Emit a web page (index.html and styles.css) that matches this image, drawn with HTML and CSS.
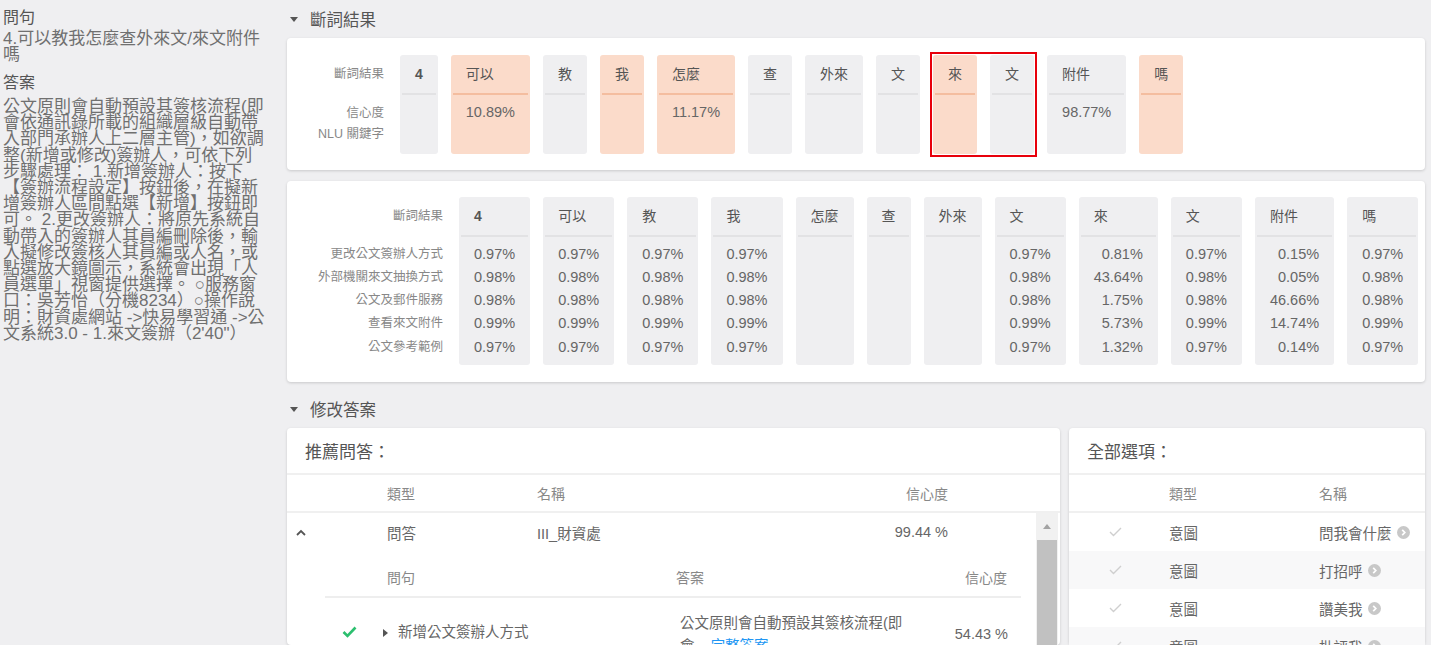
FILE: index.html
```html
<!DOCTYPE html>
<html lang="zh-Hant">
<head>
<meta charset="utf-8">
<title>斷詞結果</title>
<link rel="stylesheet" href="styles.css">
</head>
<body>
<div class="app">
  <aside class="qa">
    <div class="qa-h">問句</div>
    <div class="qa-t q">4.可以教我怎麼查外來文/來文附件<br>嗎</div>
    <div class="qa-h a">答案</div>
    <div class="qa-t ans">公文原則會自動預設其簽核流程(即<br>會依通訊錄所載的組織層級自動帶<br>入部門承辦人上二層主管)，如欲調<br>整(新增或修改)簽辦人，可依下列<br>步驟處理： 1.新增簽辦人：按下<br>【簽辦流程設定】按鈕後，在擬新<br>增簽辦人區間點選【新增】按鈕即<br>可。 2.更改簽辦人：將原先系統自<br>動帶入的簽辦人其員編刪除後，輸<br>入擬修改簽核人其員編或人名，或<br>點選放大鏡圖示，系統會出現「人<br>員選單」視窗提供選擇。 ○服務窗<br>口：吳芳怡（分機8234）○操作說<br>明：財資處網站 -&gt;快易學習通 -&gt;公<br>文系統3.0 - 1.來文簽辦（2'40"）</div>
  </aside>

  <main class="main">
    <div class="sec-head"><span class="caret-down"></span>斷詞結果</div>

    <section class="card seg">
      <div class="lbls">
        <div class="l-h">斷詞結果</div>
        <div class="l-v"><div>信心度</div><div>NLU 關鍵字</div></div>
      </div>
      <div class="toks">
        <div class="tok"><div class="th b">4</div><div class="tv"></div></div>
        <div class="tok peach"><div class="th">可以</div><div class="tv">10.89%</div></div>
        <div class="tok"><div class="th">教</div><div class="tv"></div></div>
        <div class="tok peach"><div class="th">我</div><div class="tv"></div></div>
        <div class="tok peach"><div class="th">怎麼</div><div class="tv">11.17%</div></div>
        <div class="tok"><div class="th">查</div><div class="tv"></div></div>
        <div class="tok"><div class="th">外來</div><div class="tv"></div></div>
        <div class="tok"><div class="th">文</div><div class="tv"></div></div>
        <div class="hl">
          <div class="tok peach"><div class="th">來</div><div class="tv"></div></div>
          <div class="tok"><div class="th">文</div><div class="tv"></div></div>
        </div>
        <div class="tok"><div class="th">附件</div><div class="tv">98.77%</div></div>
        <div class="tok peach"><div class="th">嗎</div><div class="tv"></div></div>
      </div>
    </section>

    <section class="card intents">
      <div class="lbls">
        <div class="l-h">斷詞結果</div>
        <div class="l-v"><div>更改公文簽辦人方式</div><div>外部機關來文抽換方式</div><div>公文及郵件服務</div><div>查看來文附件</div><div>公文參考範例</div></div>
      </div>
      <div class="toks">
        <div class="tok"><div class="th b">4</div><div class="tv"><div>0.97%</div><div>0.98%</div><div>0.98%</div><div>0.99%</div><div>0.97%</div></div></div>
        <div class="tok"><div class="th">可以</div><div class="tv"><div>0.97%</div><div>0.98%</div><div>0.98%</div><div>0.99%</div><div>0.97%</div></div></div>
        <div class="tok"><div class="th">教</div><div class="tv"><div>0.97%</div><div>0.98%</div><div>0.98%</div><div>0.99%</div><div>0.97%</div></div></div>
        <div class="tok"><div class="th">我</div><div class="tv"><div>0.97%</div><div>0.98%</div><div>0.98%</div><div>0.99%</div><div>0.97%</div></div></div>
        <div class="tok"><div class="th">怎麼</div><div class="tv"></div></div>
        <div class="tok"><div class="th">查</div><div class="tv"></div></div>
        <div class="tok"><div class="th">外來</div><div class="tv"></div></div>
        <div class="tok"><div class="th">文</div><div class="tv"><div>0.97%</div><div>0.98%</div><div>0.98%</div><div>0.99%</div><div>0.97%</div></div></div>
        <div class="tok"><div class="th">來</div><div class="tv"><div>0.81%</div><div>43.64%</div><div>1.75%</div><div>5.73%</div><div>1.32%</div></div></div>
        <div class="tok"><div class="th">文</div><div class="tv"><div>0.97%</div><div>0.98%</div><div>0.98%</div><div>0.99%</div><div>0.97%</div></div></div>
        <div class="tok"><div class="th">附件</div><div class="tv"><div>0.15%</div><div>0.05%</div><div>46.66%</div><div>14.74%</div><div>0.14%</div></div></div>
        <div class="tok"><div class="th">嗎</div><div class="tv"><div>0.97%</div><div>0.98%</div><div>0.98%</div><div>0.99%</div><div>0.97%</div></div></div>
      </div>
    </section>

    <div class="sec-head"><span class="caret-down"></span>修改答案</div>

    <div class="bottom">
      <section class="card rec">
        <div class="ctitle">推薦問答：</div>
        <div class="thead rec-head">
          <span class="c-lead"></span><span class="c-type">類型</span><span class="c-name">名稱</span><span class="c-conf">信心度</span>
        </div>
        <div class="rbody">
          <div class="rows">
            <div class="row">
              <span class="c-lead chev"><svg width="10" height="7" viewBox="0 0 10 7"><polyline points="1,6 5,2 9,6" fill="none" stroke="#555" stroke-width="1.8"/></svg></span>
              <span class="c-type">問答</span><span class="c-name">III_財資處</span><span class="c-conf">99.44 %</span>
            </div>
            <div class="sub">
              <div class="subhead">
                <span class="s-lead"></span><span class="s-q">問句</span><span class="s-a">答案</span><span class="s-c">信心度</span>
              </div>
              <div class="subrow">
                <span class="s-check"><svg width="15" height="12" viewBox="0 0 15 12"><polyline points="1.5,6 5.5,10 13.5,1.5" fill="none" stroke="#2cbf6f" stroke-width="2.6"/></svg></span>
                <span class="s-qv"><span class="caret-right"></span>新增公文簽辦人方式</span>
                <span class="s-av">公文原則會自動預設其簽核流程(即<br>會... <a class="link">完整答案</a></span>
                <span class="s-cv">54.43 %</span>
              </div>
            </div>
          </div>
          <div class="sbar"><span class="up"></span><span class="thumb"></span></div>
        </div>
      </section>

      <section class="card all">
        <div class="ctitle">全部選項：</div>
        <div class="thead">
          <span class="c-lead"></span><span class="c-type">類型</span><span class="c-name">名稱</span>
        </div>
        <div class="arow">
          <span class="a-check"><svg width="13" height="10" viewBox="0 0 13 10"><polyline points="1,5 4.5,8.5 12,1" fill="none" stroke="#cfcfcf" stroke-width="1.4"/></svg></span>
          <span class="c-type">意圖</span><span class="a-name">問我會什麼<svg class="go" width="13" height="13" viewBox="0 0 13 13"><circle cx="6.5" cy="6.5" r="6.5" fill="#c8c8c8"/><polyline points="5.2,3.8 7.8,6.5 5.2,9.2" fill="none" stroke="#fff" stroke-width="1.7"/></svg></span>
        </div>
        <div class="arow alt">
          <span class="a-check"><svg width="13" height="10" viewBox="0 0 13 10"><polyline points="1,5 4.5,8.5 12,1" fill="none" stroke="#cfcfcf" stroke-width="1.4"/></svg></span>
          <span class="c-type">意圖</span><span class="a-name">打招呼<svg class="go" width="13" height="13" viewBox="0 0 13 13"><circle cx="6.5" cy="6.5" r="6.5" fill="#c8c8c8"/><polyline points="5.2,3.8 7.8,6.5 5.2,9.2" fill="none" stroke="#fff" stroke-width="1.7"/></svg></span>
        </div>
        <div class="arow">
          <span class="a-check"><svg width="13" height="10" viewBox="0 0 13 10"><polyline points="1,5 4.5,8.5 12,1" fill="none" stroke="#cfcfcf" stroke-width="1.4"/></svg></span>
          <span class="c-type">意圖</span><span class="a-name">讚美我<svg class="go" width="13" height="13" viewBox="0 0 13 13"><circle cx="6.5" cy="6.5" r="6.5" fill="#c8c8c8"/><polyline points="5.2,3.8 7.8,6.5 5.2,9.2" fill="none" stroke="#fff" stroke-width="1.7"/></svg></span>
        </div>
        <div class="arow alt">
          <span class="a-check"><svg width="13" height="10" viewBox="0 0 13 10"><polyline points="1,5 4.5,8.5 12,1" fill="none" stroke="#cfcfcf" stroke-width="1.4"/></svg></span>
          <span class="c-type">意圖</span><span class="a-name">批評我<svg class="go" width="13" height="13" viewBox="0 0 13 13"><circle cx="6.5" cy="6.5" r="6.5" fill="#c8c8c8"/><polyline points="5.2,3.8 7.8,6.5 5.2,9.2" fill="none" stroke="#fff" stroke-width="1.7"/></svg></span>
        </div>
      </section>
    </div>
  </main>
</div>
</body>
</html>
```

FILE: styles.css
```css
* { box-sizing: border-box; }

body {
  margin: 0;
  background: #fff;
  font-family: "Liberation Sans", "Noto Sans CJK TC", sans-serif;
  color: #666;
}

.app {
  display: flex;
  height: 645px;
  overflow: hidden;
  background: #efeff1;
}

/* left question / answer panel */
.qa {
  flex: none;
  width: 287px;
  padding: 8px 0 0 3px;
}
.qa-h {
  font-size: 16px;
  line-height: 20px;
  color: #555;
}
.qa-h.a { margin-top: 9.6px; }
.qa-t {
  font-size: 17px;
  line-height: 16.2px;
  color: #707070;
  white-space: nowrap;
}
.qa-t.q { margin-top: 3px; }
.qa-t.ans { margin-top: 6px; }

/* main column */
.main {
  flex: 1;
  min-width: 0;
  padding-right: 6px;
  display: flex;
  flex-direction: column;
}
.sec-head {
  flex: none;
  height: 38px;
  display: flex;
  align-items: center;
  padding-left: 3px;
  font-size: 16.5px;
  color: #555;
}
.caret-down {
  width: 0;
  height: 0;
  border-left: 4px solid transparent;
  border-right: 4px solid transparent;
  border-top: 5px solid #555;
  margin-right: 12px;
}

.card {
  flex: none;
  background: #fff;
  border-radius: 4px;
  box-shadow: 0 1px 3px rgba(0, 0, 0, 0.16);
}

/* token cards */
.seg {
  display: flex;
  padding: 17px 0 16px 31px;
  margin-bottom: 11px;
}
.intents {
  display: flex;
  padding: 16px 0 17px 31px;
  margin-bottom: 8px;
}
.lbls {
  display: flex;
  flex-direction: column;
  align-items: flex-end;
  font-size: 12.5px;
  color: #888;
  margin-right: 16px;
  white-space: nowrap;
}
.l-h {
  height: 40px;
  line-height: 38px;
}
.seg .l-v { padding-top: 8px; line-height: 21px; text-align: right; }
.intents .l-v { padding-top: 5.5px; line-height: 23.3px; text-align: right; }

.toks {
  display: flex;
  gap: 13px;
}
.hl {
  display: flex;
  gap: 13px;
  outline: 2px solid #e8000b;
  outline-offset: 1px;
}
.tok {
  display: flex;
  flex-direction: column;
  background: #efeff1;
  border-radius: 3px;
  padding: 0 2px;
}
.seg .tok { height: 99px; }
.intents .tok { height: 168px; }
.th {
  height: 40px;
  line-height: 38px;
  border-bottom: 2px solid #e2e2e4;
  padding: 0 13px;
  font-size: 14px;
  color: #555;
  white-space: nowrap;
}
.th.b { font-weight: bold; }
.tv {
  padding: 7px 13px 0;
  font-size: 14.5px;
  line-height: 20px;
  color: #666;
  text-align: right;
  white-space: nowrap;
}
.intents .tv {
  padding-top: 5.5px;
  line-height: 23.3px;
}
.peach { background: #fbdbca; }
.peach .th { border-bottom-color: #f4bd9f; }

/* bottom cards */
.bottom {
  flex: 1;
  min-height: 0;
  display: flex;
  gap: 9px;
}
.rec {
  width: 773px;
  display: flex;
  flex-direction: column;
}
.all {
  flex: 1;
  display: flex;
  flex-direction: column;
}
.ctitle {
  flex: none;
  height: 47px;
  border-bottom: 2px solid #f0f0f0;
  padding-left: 18px;
  display: flex;
  align-items: center;
  font-size: 17px;
  color: #555;
}
.thead {
  flex: none;
  height: 38px;
  border-bottom: 2px solid #f0f0f0;
  display: flex;
  align-items: center;
  font-size: 14px;
  color: #888;
}
.rec-head { padding-right: 112px; }
.c-lead { flex: none; width: 100px; }
.c-type { flex: none; width: 150px; }
.c-name { flex: 1; }
.c-conf { text-align: right; }

.rbody {
  flex: 1;
  min-height: 0;
  display: flex;
}
.rows { flex: 1; min-width: 0; }
.row {
  height: 38px;
  display: flex;
  align-items: center;
  padding-right: 88px;
  font-size: 14.5px;
  color: #666;
}
.chev {
  padding-left: 9px;
  display: flex;
  align-items: center;
}

.sub { margin: 0 15px 0 38px; }
.subhead {
  height: 47px;
  border-bottom: 2px solid #eeeeee;
  display: flex;
  align-items: flex-end;
  padding: 0 14px 8px 0;
  font-size: 14px;
  line-height: 20px;
  color: #888;
}
.s-lead { flex: none; width: 62px; }
.s-q { flex: none; width: 289px; }
.s-a { flex: 1; }
.s-c { text-align: right; }

.subrow {
  display: flex;
  align-items: flex-start;
  padding: 14px 13px 0 0;
  font-size: 14.5px;
  color: #666;
}
.s-check {
  flex: none;
  width: 58px;
  padding-left: 17px;
  margin-top: 14px;
  display: flex;
}
.s-qv {
  flex: none;
  width: 297px;
  margin-top: 9px;
  line-height: 23px;
  display: flex;
  align-items: center;
}
.caret-right {
  width: 0;
  height: 0;
  border-top: 4px solid transparent;
  border-bottom: 4px solid transparent;
  border-left: 5px solid #555;
  margin-right: 10px;
}
.s-av {
  flex: 1;
  line-height: 23px;
}
.link { color: #2196f3; }
.s-cv {
  margin-top: 11px;
  line-height: 23px;
}

.sbar {
  flex: none;
  width: 22px;
  margin-right: 2px;
  background: #f1f1f1;
  display: flex;
  flex-direction: column;
  align-items: center;
}
.sbar .up {
  margin-top: 11px;
  width: 0;
  height: 0;
  border-left: 4.5px solid transparent;
  border-right: 4.5px solid transparent;
  border-bottom: 5px solid #a3a3a3;
}
.sbar .thumb {
  margin-top: 11px;
  width: 20px;
  flex: 1;
  background: #c1c1c1;
}

.arow {
  flex: none;
  height: 38px;
  display: flex;
  align-items: center;
  font-size: 14.5px;
  color: #666;
}
.arow.alt { background: #f8f8f9; }
.a-check {
  flex: none;
  width: 100px;
  padding-left: 40px;
  display: flex;
}
.a-name {
  display: flex;
  align-items: center;
  gap: 5px;
  white-space: nowrap;
}
```
